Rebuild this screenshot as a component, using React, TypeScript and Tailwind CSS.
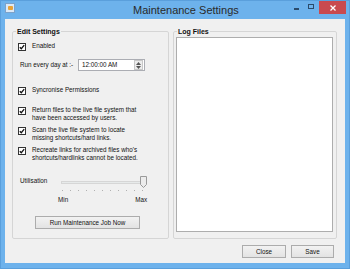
import { JSX } from "react";

function Check({ label, lines }: { label?: string; lines?: string[] }): JSX.Element {
  return (
    <div className="flex items-start">
      <div className="mt-[1px] w-[8px] h-[8px] border border-[#333] bg-white flex items-center justify-center shrink-0">
        <svg width="6" height="6" viewBox="0 0 6 6">
          <path d="M0.8 3.2 L2.3 4.7 L5.2 1.2" fill="none" stroke="#111" strokeWidth="1.3" />
        </svg>
      </div>
      <div className="ml-[6px] leading-[8px]">
        {label ? <div>{label}</div> : lines?.map((l) => <div key={l}>{l}</div>)}
      </div>
    </div>
  );
}

function WinButton({ children, className }: { children: string; className: string }): JSX.Element {
  return (
    <div
      className={
        "h-[13px] border border-[#acacac] bg-gradient-to-b from-[#f2f2f2] to-[#e3e3e3] flex items-center justify-center text-[6.3px] " +
        className
      }
    >
      {children}
    </div>
  );
}

export default function App(): JSX.Element {
  const ticks = Array.from({ length: 11 }, (_, i) => i);
  return (
    <div className="w-[350px] h-[269px] bg-[#6db2ec] border border-[#5a9fdc] flex flex-col font-['Liberation_Sans',Arial,sans-serif] text-[#111] overflow-hidden">
      {/* title bar */}
      <div className="h-[18px] flex items-start shrink-0">
        <div className="ml-[4px] mt-[2px] w-[10px] h-[10px] bg-[#dce9f7] border border-[#7da2c9] flex items-center justify-center">
          <div className="w-[5px] h-[4px] bg-[#e8a33a] rounded-[1px]" />
        </div>
        <span className="ml-[118px] text-[11px] leading-[18px] text-[#2a2a2a]">Maintenance Settings</span>
        <div className="flex-1" />
        <div className="mt-[7px] w-[5px] h-[1.5px] bg-[#2b4b6b]" />
        <div className="ml-[9px] mt-[3px] w-[6px] h-[5px] border border-[#2b4b6b]" />
        <div className="ml-[5px] w-[27px] h-[13px] bg-[#c94a4f] flex items-center justify-center mr-[3px]">
          <svg width="6" height="6" viewBox="0 0 6 6">
            <path d="M0.5 0.5 L5.5 5.5 M5.5 0.5 L0.5 5.5" stroke="white" strokeWidth="1.3" />
          </svg>
        </div>
      </div>

      {/* client area */}
      <div className="mx-[4px] h-[244px] bg-[#f0f0f0] shrink-0 flex flex-col text-[6.3px]">
        <div className="mt-[8px] flex">
          {/* Edit Settings */}
          <fieldset className="ml-[7px] w-[157px] h-[212px] border border-[#d5d5d5] rounded-[2px]">
            <legend className="ml-[3px] px-[1px] text-[7px] font-bold leading-[9px]">Edit Settings</legend>
            <div className="pl-[5px] flex flex-col">
              <div className="mt-[6px]">
                <Check label="Enabled" />
              </div>
              <div className="mt-[8px] h-[12px] flex items-center">
                <span className="ml-[2px] w-[58px]">Run every day at :-</span>
                <div className="w-[67px] h-[12px] border border-[#abadb3] bg-white flex items-center">
                  <span className="ml-[3px] flex-1">12:00:00 AM</span>
                  <div className="w-[9px] h-[10px] mr-[1px] border border-[#c8c8c8] bg-[#ececec] flex flex-col items-center justify-center gap-[1px]">
                    <svg width="5" height="3" viewBox="0 0 5 3">
                      <path d="M0 3 L2.5 0 L5 3 Z" fill="#555" />
                    </svg>
                    <svg width="5" height="3" viewBox="0 0 5 3">
                      <path d="M0 0 L2.5 3 L5 0 Z" fill="#555" />
                    </svg>
                  </div>
                </div>
              </div>
              <div className="mt-[15px]">
                <Check label="Syncronise Permissions" />
              </div>
              <div className="mt-[11px]">
                <Check lines={["Return files to the live file system that", "have been accessed by users."]} />
              </div>
              <div className="mt-[4px]">
                <Check lines={["Scan the live file system to locate", "missing shortcuts/hard links."]} />
              </div>
              <div className="mt-[4px]">
                <Check lines={["Recreate links for archived files who's", "shortcuts/hardlinks cannot be located."]} />
              </div>

              <div className="mt-[13px] flex items-start">
                <span className="ml-[2px] w-[41px] leading-[12px]">Utilisation</span>
                <div className="w-[86px] flex flex-col">
                  <div className="relative h-[14px] flex items-center">
                    <div className="w-full h-[3px] bg-[#e7eaea] border border-[#d6d6d6]" />
                    <svg className="absolute right-[0px] top-[1px]" width="7" height="12" viewBox="0 0 7 12">
                      <path d="M0.5 0.5 H6.5 V8.5 L3.5 11.5 L0.5 8.5 Z" fill="#ececec" stroke="#9a9a9a" />
                    </svg>
                  </div>
                  <div className="mt-[1px] px-[1px] pr-[4px] flex justify-between">
                    {ticks.map((t) => (
                      <div key={t} className="w-[1px] h-[1px] bg-[#b0b0b0]" />
                    ))}
                  </div>
                </div>
              </div>
              <div className="mt-[5px] flex leading-[8px]">
                <span className="ml-[40px]">Min</span>
                <span className="ml-[67px]">Max</span>
              </div>

              <WinButton className="mt-[12px] ml-[17px] w-[105px]">Run Maintenance Job Now</WinButton>
            </div>
          </fieldset>

          {/* Log Files */}
          <fieldset className="ml-[4px] w-[164px] h-[212px] border border-[#d5d5d5] rounded-[2px]">
            <legend className="ml-[3px] px-[1px] text-[7px] font-bold leading-[9px]">Log Files</legend>
            <div className="mt-[1px] ml-[2px] w-[157px] h-[195px] bg-white border border-[#adadad]" />
          </fieldset>
        </div>

        <div className="mt-[6px] flex justify-end pr-[11px] gap-[5px]">
          <WinButton className="w-[44px]">Close</WinButton>
          <WinButton className="w-[43px]">Save</WinButton>
        </div>
      </div>
    </div>
  );
}
